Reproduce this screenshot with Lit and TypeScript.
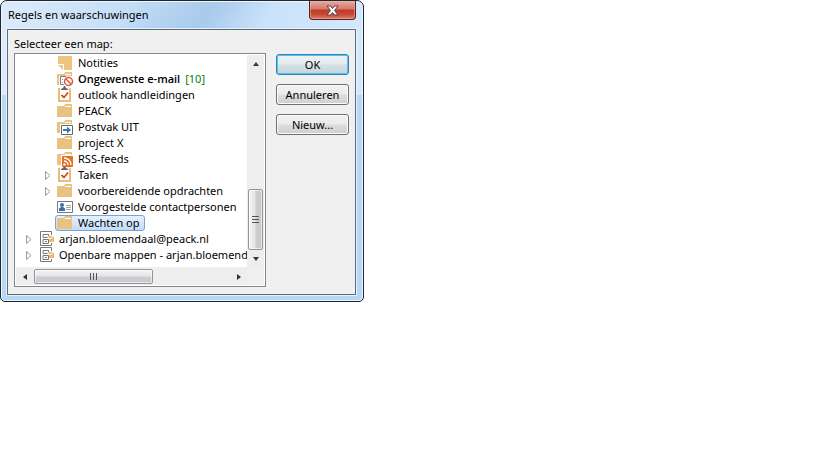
import { LitElement, html, svg, css } from "lit";
import { customElement, state } from "lit/decorators.js";

type Icon = "note" | "junk" | "task" | "folder" | "outbox" | "rss" | "contact" | "store";

interface Node {
  label: string;
  icon: Icon;
  top?: boolean;
  expandable?: boolean;
  unread?: number;
}

const nodes: Node[] = [
  { label: "Notities", icon: "note" },
  { label: "Ongewenste e-mail", icon: "junk", unread: 10 },
  { label: "outlook handleidingen", icon: "task" },
  { label: "PEACK", icon: "folder" },
  { label: "Postvak UIT", icon: "outbox" },
  { label: "project X", icon: "folder" },
  { label: "RSS-feeds", icon: "rss" },
  { label: "Taken", icon: "task", expandable: true },
  { label: "voorbereidende opdrachten", icon: "folder", expandable: true },
  { label: "Voorgestelde contactpersonen", icon: "contact" },
  { label: "Wachten op", icon: "folder" },
  { label: "arjan.bloemendaal@peack.nl", icon: "store", top: true, expandable: true },
  { label: "Openbare mappen - arjan.bloemend", icon: "store", top: true, expandable: true },
];

const folder = svg`<path d="M0 3h7l1-2h7v13H0z" fill="#e9c282"/><path d="M8 3.500h6" stroke="#fff"/>`;

const icons: Record<Icon, unknown> = {
  folder,
  note: svg`<path d="M1 1h14v14H7V9H1z" fill="#edc57f"/><path d="M1 10h5v5z" fill="#edc57f"/>`,
  junk: svg`${folder}
    <path d="M2 5h13v11H2z" fill="#fff"/>
    <path d="M7 13.500H3.500V5.500H9" fill="none" stroke="#777"/>
    <path d="M5 8.500h1M5 11.500h1" stroke="#888"/>
    <circle cx="11.500" cy="10.500" r="5.500" fill="#fff"/>
    <circle cx="11.500" cy="10.500" r="4" fill="#fff" stroke="#d9573c" stroke-width="1.500"/>
    <path d="M8.500 7.500l6 6" stroke="#d9573c" stroke-width="1.500"/>`,
  task: svg`<path d="M1 1h13v14H1z" fill="#e9bd78"/><path d="M3 0h9v13H3z" fill="#fff"/>
    <path d="M4 3V2l2-1 1-2h1l1 2 2 1v1z" fill="#666"/>
    <path d="M4.500 8l2.500 2.500 4-5" fill="none" stroke="#d24a2b" stroke-width="1.800"/>`,
  outbox: svg`${folder}<path d="M3 5h13v11H3z" fill="#fff"/>
    <path d="M4.500 6.500h11v9h-11z" fill="#fff" stroke="#666"/>
    <path d="M6 10h4V7.500l4 3.500-4 3.500V12H6z" fill="#3b78b5"/>`,
  rss: svg`${folder}<path d="M4 4h12v12H4z" fill="#fff"/>
    <rect x="5" y="5" width="11" height="11" rx="1" fill="#e6701e"/>
    <circle cx="7.500" cy="13.500" r="1.200" fill="#fff"/>
    <path d="M7 10a4 4 0 0 1 4 4M7 7a7 7 0 0 1 7 7" fill="none" stroke="#fff" stroke-width="1.400"/>`,
  contact: svg`<path d="M.5 2.500h15v11H.5z" fill="#fff" stroke="#777"/>
    <circle cx="5" cy="6" r="2" fill="#3a6ea5"/><path d="M2 12V9.500L4 8h2l2 1.500V12z" fill="#3a6ea5"/>
    <path d="M9 6.500h5M9 8.500h5M9 10.500h5" stroke="#a0a8b0"/>`,
  store: svg`<path d="M11.500 4V.5H.5V14.500h11V12" fill="#fff" stroke="#777"/>
    <path d="M3 6.500h5.500v-3h-5.500zM3 12.500h5.500v-4h-5.500z" fill="#fff" stroke="#777"/>
    <path d="M5 10.500h2" stroke="#777"/>
    <path d="M6 5h8v6H9V8z" fill="#edbd78"/><path d="M6 4.500l4 3.500 4-3.500" fill="none" stroke="#fff"/>`,
};

const arrows = {
  up: "M1 6l3-4 3 4z",
  down: "M1 2h6l-3 4z",
  left: "M6 1v6L2 4z",
  right: "M2 1v6l4-3z",
};

@customElement("app-root")
export class AppRoot extends LitElement {
  @state() private selected = 10;

  static styles = css`
    :host {
      display: block;
      font: 11px/16px "Noto Sans", "Open Sans", sans-serif;
      color: #000;
    }
    * { box-sizing: border-box; }
    button { font: inherit; color: inherit; padding: 0; margin: 0; cursor: default; }
    svg { display: block; flex: none; overflow: visible; }
    .dialog {
      width: 364px;
      max-width: 100%;
      border: 1px solid #20262d;
      border-radius: 7px 7px 5px 5px;
      padding: 0 7px 6px 6px;
      background:
        linear-gradient(125deg, #b0d0ef00 35%, #a9caeb 56%, #b0d0ef00 72%) top / 100% 30px no-repeat,
        linear-gradient(90deg, #dcebfa, #c0dcf6 40%, #c6e0fa 65%, #d4e8fc) top / 100% 94px no-repeat,
        #b7d7f4;
      box-shadow: inset 0 0 0 1px #eef7ff;
    }
    .titlebar { display: flex; justify-content: space-between; height: 28px; padding-left: 1px; }
    h1 { margin: 0; padding-top: 6px; font-size: 11px; line-height: 16px; font-weight: 400; }
    .close {
      width: 47px;
      height: 19px;
      display: grid;
      place-items: center;
      border: 1px solid #50202a;
      border-top: 0;
      border-radius: 0 0 4px 4px;
      background: linear-gradient(#e5aaa0, #d5786a 45%, #bd3a27 50%, #c94a35 75%, #dc8068);
      box-shadow: inset 0 0 0 1px #f0b9ae88;
    }
    .body {
      display: flex;
      gap: 10px;
      padding: 6px 6px 7px;
      border: 1px solid #5c6b7a;
      background: #f0f0f0;
      box-shadow: 0 0 0 1px #e5f3ff;
    }
    .picker { flex: 1; min-width: 0; }
    .caption { margin: 0; padding-bottom: 1px; }
    .frame {
      display: grid;
      grid-template-columns: minmax(0, 1fr) 17px;
      padding: 1px;
      border: 1px solid #828790;
      background: linear-gradient(#f0f0f0, #f0f0f0) content-box, #fff;
    }
    .tree { margin: 0; padding: 0 0 4px; list-style: none; background: #fff; overflow: hidden; }
    .row { display: flex; align-items: center; height: 16px; padding-left: 25px; white-space: nowrap; }
    .row.top { padding-left: 6px; }
    .expander { width: 14px; height: 16px; border: 0; background: none; display: grid; place-items: center; flex: none; }
    .item { display: flex; align-items: center; gap: 5px; height: 16px; padding: 0 4px 0 1px; border: 1px solid transparent; border-radius: 3px; }
    .top .item { gap: 3px; padding: 0 0 0 3px; }
    .item.selected { border-color: #7da2ce; background: linear-gradient(#e6f1fd, #c3dcfa); }
    .unread { font-family: "Open Sans", "Noto Sans", sans-serif; font-weight: 600; }
    .count { color: #008000; }
    .bar { display: flex; background: #eee; }
    .bar.vertical { flex-direction: column; }
    .bar.horizontal { padding-top: 1px; }
    .step { width: 17px; height: 17px; border: 0; background: none; display: grid; place-items: center; flex: none; }
    .thumb { display: grid; place-items: center; border: 1px solid #959595; border-radius: 2px; box-shadow: inset 0 0 0 1px #fff9; }
    .vertical .thumb { height: 61px; width: 15px; margin: auto 1px 0; background: linear-gradient(90deg, #f4f4f4, #e5e5e7 48%, #cfcfd2 52%, #c8c8cd); }
    .horizontal .thumb { width: 119px; height: 15px; margin: 1px; background: linear-gradient(#f4f4f4, #e5e5e7 48%, #cfcfd2 52%, #c8c8cd); }
    .horizontal .step:last-child { margin-left: auto; }
    .actions { display: flex; flex-direction: column; gap: 9px; width: 73px; padding-top: 18px; }
    .action {
      height: 21px;
      border: 1px solid #707070;
      border-radius: 3px;
      background: linear-gradient(#f2f2f2, #ebebeb 48%, #dddddd 52%, #cfcfcf);
      box-shadow: inset 0 0 0 1px #fcfcfc;
    }
    .action.primary {
      border-color: #3c7fb1;
      background: linear-gradient(#eef2f4, #e4eaee 48%, #d6dfe5 52%, #c9d5dc);
      box-shadow: inset 0 0 0 1px #48c8f0;
    }
  `;

  private step(dir: keyof typeof arrows, label: string) {
    return html`<button class="step" aria-label=${label}>
      <svg width="8" height="8" viewBox="0 0 8 8"><path d=${arrows[dir]} fill="#333" /></svg>
    </button>`;
  }

  private row(n: Node, i: number) {
    return html`<li class="row ${n.top ? "top" : ""}" role="treeitem" aria-selected=${i === this.selected ? "true" : "false"}
      @click=${() => (this.selected = i)}>
      ${n.expandable
        ? html`<button class="expander" aria-label="${n.label} uitvouwen">
            <svg width="6" height="9" viewBox="0 0 6 9"><path d="M.5 .5v8l4.500-4z" fill="#fff" stroke="#999" /></svg>
          </button>`
        : html`<span class="expander"></span>`}
      <span class="item ${i === this.selected ? "selected" : ""}">
        <svg width="16" height="16" viewBox="0 0 16 16">${icons[n.icon]}</svg>
        <span class=${n.unread ? "unread" : ""}>${n.label}</span>
        ${n.unread ? html`<span class="count">[${n.unread}]</span>` : ""}
      </span>
    </li>`;
  }

  render() {
    return html`<section class="dialog" role="dialog" aria-labelledby="title">
      <header class="titlebar">
        <h1 id="title">Regels en waarschuwingen</h1>
        <button class="close" aria-label="Sluiten">
          <svg width="13" height="11" viewBox="0 0 13 11">
            <path d="M1 1h3.500l2 2.500 2-2.500H12L8.500 5.500 12 10H8.500l-2-2.500-2 2.500H1l3.500-4.500z" fill="#fff" stroke="#55414a" />
          </svg>
        </button>
      </header>
      <div class="body">
        <div class="picker">
          <p class="caption" id="caption">Selecteer een map:</p>
          <div class="frame">
            <ul class="tree" role="tree" aria-labelledby="caption">${nodes.map((n, i) => this.row(n, i))}</ul>
            <div class="bar vertical">
              ${this.step("up", "Omhoog")}
              <div class="thumb"><svg width="7" height="8" viewBox="0 0 7 8"><path d="M0 .5h7M0 3.500h7M0 6.500h7" stroke="#555" /></svg></div>
              ${this.step("down", "Omlaag")}
            </div>
            <div class="bar horizontal">
              ${this.step("left", "Naar links")}
              <div class="thumb"><svg width="8" height="7" viewBox="0 0 8 7"><path d="M.5 0v7M3.500 0v7M6.500 0v7" stroke="#555" /></svg></div>
              ${this.step("right", "Naar rechts")}
            </div>
          </div>
        </div>
        <div class="actions">
          <button class="action primary">OK</button>
          <button class="action">Annuleren</button>
          <button class="action">Nieuw...</button>
        </div>
      </div>
    </section>`;
  }
}
